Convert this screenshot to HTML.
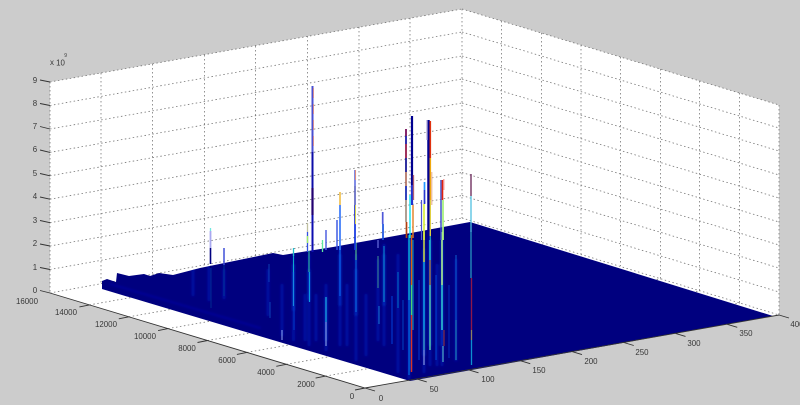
<!DOCTYPE html>
<html><head><meta charset="utf-8"><style>
html,body{margin:0;padding:0;background:#ccc;width:800px;height:405px;overflow:hidden}
svg{display:block}
text{font-family:"Liberation Sans",sans-serif;font-size:7.9px;fill:#383838;text-anchor:middle}
</style></head><body>
<svg width="800" height="405" viewBox="0 0 800 405" xmlns="http://www.w3.org/2000/svg">
<defs><filter id="b" x="-5%" y="-5%" width="110%" height="110%"><feGaussianBlur stdDeviation="0.3"/></filter>
<filter id="h" x="-5%" y="-5%" width="110%" height="110%"><feGaussianBlur stdDeviation="1.1"/></filter>
<clipPath id="s"><path d="M102 281L107 279L116 282L117 273L129 276L144 274L150 276L159 273L173 275L200 268L273 253L283 255L333 247L400 235L470 222L773 316L410 381L102 289Z"/></clipPath></defs>
<rect width="800" height="405" fill="#ccc"/>
<g filter="url(#b)">
<path d="M50 82L462 9L779 105V315L365 388L50 293Z" fill="#fff"/>
<g fill="none" stroke="#777" stroke-width=".8" stroke-dasharray="1.5 2.5">
<path d="M50 82L462 9M50 105.5L462 32M50 129L462 56M50 152.4L462 79M50 175.8L462 103M50 199.2L462 126M50 222.7L462 149M50 246L462 172.5M50 269.5L462 195.5M50 293L462 218"/>
<path d="M462 9L779 105M462 32L779 128M462 56L779 151M462 79L779 175M462 103L779 198M462 126L779 222M462 149L779 245M462 172.5L779 268M462 195.5L779 292M462 218L779 315"/>
<path d="M50 82V293M101 73V284M152.500 64V275M204.500 55V266M255.500 46V256M307.500 36V247M359 27V238M410 18V228M462 9V218"/>
<path d="M501.500 21V230M541.500 33V242M581 45V254M620.500 57V266M660.500 69V279M699.500 81V291M739.500 93V303M779 105V315"/>
<path d="M89.400 304.900L503 232M128.800 316.800L543 244M168.100 328.600L582 256M207.500 340.500L621 268M246.900 352.400L661 279M286.300 364.300L700 291M325.600 376.100L740 303"/>
</g>
<path d="M102 281L107 279L116 282L117 273L129 276L144 274L150 276L159 273L173 275L200 268L273 253L283 255L333 247L400 235L470 222L773 316L410 381L102 289Z" fill="#00007f"/>
<g clip-path="url(#s)">
<g filter="url(#h)" fill="none" stroke-linecap="round">
<path d="M110 284L260 328" stroke="#000098" stroke-width="2"/>
<path d="M209 262V300M224 270V298M193 265V295M268 270V315M282 285V335M293.500 255V340M305 295V340M309 255V345M326 285V350M316 295V340M340 240V345M347 285V345M356 255V360M366 295V355M384 245V345M378 260V340M398 255V372M409 240V378M424 240V372M430 240V365M442 240V365M456 260V360M437 265V365" stroke="#0018c0" stroke-width="2.600" stroke-opacity=".6"/>
<path d="M293.500 265V310M309 270V300M326 298V340M340 255V305M356 270V315M384 255V305M411 240V370M424 250V355M430 240V345M442 240V345" stroke="#0050e8" stroke-width="1.800" stroke-opacity=".65"/>
</g>
<g fill="none" stroke-width="1">
<path d="M210.500 248V268" stroke="#000070" stroke-width="1.500"/><path d="M211 268V308" stroke="#002a90"/><path d="M224 262V296" stroke="#00309a"/><path d="M269 264V282M270 302V318" stroke="#0a50c0" stroke-width=".8"/>
<path d="M293.500 252V272" stroke="#10b8d0" stroke-width=".9"/><path d="M293.500 272V306" stroke="#1488e0" stroke-width="1.200"/><path d="M294 306V330" stroke="#0038c8"/>
<path d="M282 330V340" stroke="#90a8f8"/><path d="M309 250V272" stroke="#30d0a0"/><path d="M309.500 272V302" stroke="#1098e0" stroke-width="1.200"/>
<path d="M326 297V322" stroke="#20a8e0" stroke-width="1.200"/><path d="M326 322V346" stroke="#98b0f0"/><path d="M340 235V296" stroke="#1060e8" stroke-width="1.200"/>
<path d="M356 232V260" stroke="#60e090"/><path d="M356 260V312" stroke="#0c70e0"/><path d="M378 256V288" stroke="#307a90" stroke-width="1.200"/><path d="M384 246V302" stroke="#1088d0" stroke-width="1.100"/><path d="M379 306V324" stroke="#2098e0" stroke-width=".8"/>
<path d="M398 272V308" stroke="#0088d0" stroke-width=".8"/><path d="M392 296V344" stroke="#0050f0" stroke-width=".8"/><path d="M403 300V350" stroke="#0060e0" stroke-width=".7"/><path d="M419 280V360" stroke="#0048e0" stroke-width=".8"/><path d="M436 275V360" stroke="#0058e0" stroke-width=".8"/><path d="M449 285V358" stroke="#0040d0" stroke-width=".7"/>
<path d="M409 235V300" stroke="#10d0e0" stroke-width="1.200"/><path d="M409 300V375" stroke="#0070e0" stroke-width="1.200"/>
<path d="M411.500 235V285" stroke="#e06010" stroke-width="1.400"/><path d="M411.500 285V315" stroke="#50d070" stroke-width="1.300"/><path d="M411.500 315V372" stroke="#d83020" stroke-width="1.400"/><path d="M413 240V330" stroke="#10a0c0"/>
<path d="M424 232V262" stroke="#d0e040" stroke-width="1.500"/><path d="M424 262V330" stroke="#10a0e0" stroke-width="1.500"/><path d="M424 330V350" stroke="#50d0d0"/><path d="M424 350V365" stroke="#a0b0f0"/>
<path d="M430 232V260" stroke="#30e0d0" stroke-width="1.300"/><path d="M430 260V285" stroke="#b08040" stroke-width="1.300"/><path d="M430 285V350" stroke="#60e0b0" stroke-width="1.300"/>
<path d="M442 232V285" stroke="#b0f090" stroke-width="1.600"/><path d="M442 285V330" stroke="#30c8d0" stroke-width="1.500"/><path d="M444 330V346" stroke="#a03030"/><path d="M443 346V362" stroke="#60d0d0"/>
<path d="M456 255V320" stroke="#1060d0"/><path d="M456 320V360" stroke="#2098c0"/>
<path d="M471 226V278" stroke="#30c0d0"/><path d="M471.500 278V330" stroke="#901848" stroke-width="1.300"/><path d="M471.500 330V340" stroke="#908060" stroke-width="1.300"/><path d="M471.500 340V365" stroke="#1090d0" stroke-width="1.300"/>
</g>
</g>
<g fill="none" stroke-width="1.300">
<path d="M210.500 228V231" stroke="#70e8e0"/><path d="M210.500 231V248" stroke="#a8a8f0" stroke-width="1.800"/><path d="M210.500 248V264" stroke="#000080" stroke-width="1.600"/>
<path d="M224 248V265" stroke="#4050d8" stroke-width="1.500"/>
<path d="M293.500 248V256" stroke="#20c0d0"/><path d="M307.500 223V232" stroke="#c0c0a0"/><path d="M307.500 232V252" stroke="#3050e0"/><path d="M307.500 236V243" stroke="#a0f060"/>
<path d="M312.500 86V152" stroke="#4850d0" stroke-width="2"/><path d="M313.500 88V150" stroke="#e08880" stroke-dasharray="10 6" stroke-width=".8"/><path d="M312.500 152V188" stroke="#0808a8" stroke-width="2"/><path d="M312.500 188V215" stroke="#200070" stroke-width="2.200"/><path d="M312.500 215V252" stroke="#0808b0" stroke-width="2"/>
<path d="M322.500 240V252" stroke="#60e8a0"/><path d="M326 230V250" stroke="#5060e0" stroke-width="1.500"/><path d="M337 220V250" stroke="#3050e0" stroke-width="1.400"/>
<path d="M340 192V205" stroke="#f0c050" stroke-width="1.700"/><path d="M340 205V250" stroke="#3878f8" stroke-width="1.700"/>
<path d="M355 170V186" stroke="#6070e0" stroke-width="1.600"/><path d="M355.600 170V180" stroke="#f09070" stroke-width=".9"/><path d="M355 186V205" stroke="#6068c0" stroke-width="1.700"/><path d="M355 205V225" stroke="#2030d8" stroke-width="1.700"/><path d="M355.500 205V224" stroke="#e0e040" stroke-width=".9"/><path d="M355 225V250" stroke="#1030e0" stroke-width="1.700"/>
<path d="M378 240V248" stroke="#6068d8"/><path d="M382.700 212V224" stroke="#5058d8" stroke-width="1.700"/><path d="M383 224V240" stroke="#1850e0" stroke-width="1.700"/>
<path d="M406 129V136" stroke="#700050" stroke-width="1.700"/><path d="M406 136V144" stroke="#1010a0" stroke-width="1.700"/><path d="M406 144V158" stroke="#901040" stroke-width="1.700"/><path d="M406 158V172" stroke="#0a0a90" stroke-width="1.700"/><path d="M406 172V186" stroke="#b07060" stroke-width="1.700"/><path d="M406 186V200" stroke="#1020b0" stroke-width="1.700"/><path d="M406 200V222" stroke="#a09080" stroke-width="1.700"/><path d="M406.500 222V238" stroke="#b04010" stroke-width="1.700"/>
<path d="M412 116V185" stroke="#000090" stroke-width="2.200"/><path d="M412 185V205" stroke="#2030d0" stroke-width="2.200"/><path d="M410 195V238" stroke="#10e0f0" stroke-width="1.400"/><path d="M413.500 175V200" stroke="#b06070" stroke-width="1.300"/><path d="M413 205V238" stroke="#e08020" stroke-width="1.400"/>
<path d="M421.500 200V240" stroke="#5058d0" stroke-width="1.200"/>
<path d="M424.500 182V190" stroke="#2098ff" stroke-width="1.700"/><path d="M424.500 190V204" stroke="#2838d0" stroke-width="1.700"/><path d="M424 204V240" stroke="#d8f040" stroke-width="1.700"/>
<path d="M428.500 120V240" stroke="#000090" stroke-width="2.500"/><path d="M430.300 121V158" stroke="#e03010" stroke-width="1.600"/><path d="M430.300 158V200" stroke="#f0a810" stroke-width="1.600"/><path d="M430.300 200V236" stroke="#e0d040" stroke-width="1.400"/><path d="M431.800 172V205" stroke="#e8b090" stroke-width="1.100"/><path d="M427 120V140" stroke="#b0a8d8"/>
<path d="M441 180V240" stroke="#4050c8" stroke-width="1.500"/><path d="M442.500 180V200" stroke="#e02010" stroke-width="1.600"/><path d="M443.800 179V190" stroke="#f09090" stroke-width="1.200"/><path d="M443 200V240" stroke="#a8f080" stroke-width="1.800"/>
<path d="M471 174V196" stroke="#703060" stroke-width="1.400"/><path d="M471 196V232" stroke="#50c0e0" stroke-width="1.300"/>
</g>
<g fill="none" stroke="#333" stroke-width=".9">
<path d="M50 293L365 388L779 315"/>
<path d="M40 80L50 82M40 103.500L50 105.500M40 126.500L50 129M40 150L50 152.400M40 173.500L50 175.800M40 197L50 199.200M40 220.500L50 222.700M40 244L50 246M40 267.500L50 269.500M40 290.500L50 293"/>
<path d="M79.400 306.900L89.400 304.900M118.800 318.800L128.800 316.800M158.100 330.600L168.100 328.600M197.500 342.500L207.500 340.500M236.900 354.400L246.900 352.400M276.300 366.300L286.300 364.300M315.600 378.100L325.600 376.100M355 390L365 388"/>
<path d="M365 388L375 391M416.750 378.900L426.750 381.900M468.500 369.800L478.500 372.800M520.250 360.700L530.250 363.700M572 351.600L582 354.600M623.750 342.500L633.750 345.500M675.500 333.400L685.500 336.400M727.250 324.300L737.250 327.300M779 315L789 318"/>
</g>
<g>
<text x="35" y="83">9</text><text x="35" y="106">8</text><text x="35" y="129">7</text><text x="35" y="152">6</text><text x="35" y="176">5</text><text x="35" y="199">4</text><text x="35" y="223">3</text><text x="35" y="246">2</text><text x="35" y="270">1</text><text x="35" y="293">0</text>
<text x="52" y="65">x</text><text x="60.500" y="65.500">10</text><text x="65.700" y="57" style="font-size:5px">9</text>
<text x="27" y="304">16000</text><text x="66" y="315">14000</text><text x="106" y="327">12000</text><text x="145" y="339">10000</text><text x="187" y="351">8000</text><text x="227" y="363">6000</text><text x="266" y="375">4000</text><text x="306" y="387">2000</text><text x="352" y="399">0</text>
<text x="381" y="401">0</text><text x="434" y="392">50</text><text x="488" y="382">100</text><text x="539" y="373">150</text><text x="591" y="364">200</text><text x="642" y="355">250</text><text x="694" y="346">300</text><text x="746" y="336">350</text><text x="797" y="327">400</text>
</g>
</g>
</svg>
</body></html>
